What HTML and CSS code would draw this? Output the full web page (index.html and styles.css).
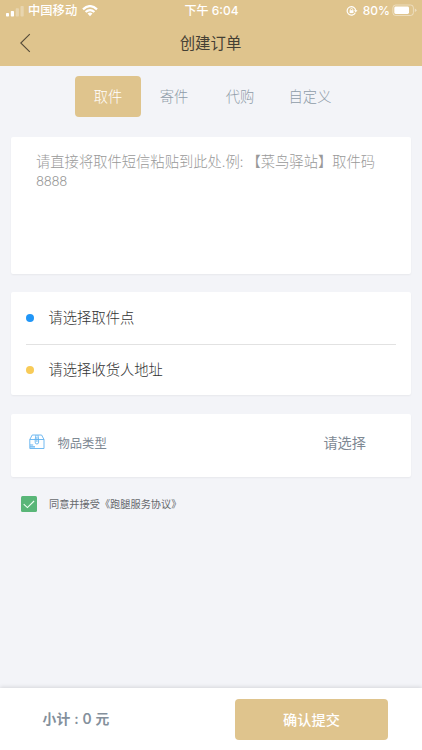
FILE: index.html
```html
<!DOCTYPE html>
<html lang="zh-CN">
<head>
<meta charset="utf-8">
<meta name="viewport" content="width=device-width">
<title>创建订单</title>
<link rel="stylesheet" href="styles.css">
</head>
<body>
<header class="header">
  <div class="status">
    <div class="carrier">
      <svg class="signal" width="18" height="12" viewBox="0 0 18 12" fill="#fff"><rect x="0" y="8" width="3" height="3.5" rx=".7"/><rect x="4.8" y="6" width="3.2" height="5.5" rx=".7"/><g opacity=".3"><rect x="9.7" y="3.3" width="3.2" height="8.2" rx=".7"/><rect x="14.5" y="1" width="3.2" height="10.5" rx=".7"/></g></svg>
      <span>中国移动</span>
      <svg class="wifi" width="16" height="12" viewBox="0 0 16 12" fill="none" stroke="#fff" stroke-width="2.3"><path d="M1 4.3Q8-2 15 4.3M3.6 7Q8 3.2 12.4 7"/><path d="M5.5 8.6Q8 6.6 10.5 8.6L8 11.2Z" fill="#fff" stroke="none"/></svg>
    </div>
    <div class="clock">下午 6:04</div>
    <div class="power">
      <svg class="lock" width="12" height="12" viewBox="0 0 12 12" fill="none" stroke="#fff"><path d="M9.3 7.7A4.3 4.3 0 1 1 9.7 5.6" stroke-width="1.2"/><path d="M8 5.2H11.5L9.7 7.5Z" fill="#fff" stroke="none"/><rect x="3.6" y="5.2" width="3.9" height="2.9" fill="#fff" stroke="none"/><path d="M4.4 5.4V4.6a1.15 1.15 0 0 1 2.3 0v.8" stroke-width=".8"/></svg>
      <span>80%</span>
      <svg width="25" height="13" viewBox="0 0 25 13"><rect x=".9" y="1" width="20.5" height="10.5" rx="2.8" fill="none" stroke="#fff" stroke-opacity=".42"/><rect x="2.3" y="2.5" width="14.7" height="7.5" rx="1.4" fill="#fff"/><path d="M22.8 4.4Q24.5 5 24.5 6.2T22.8 8Z" fill="#fff" opacity=".45"/></svg>
    </div>
  </div>
  <div class="nav">
    <svg class="back" width="12" height="20" viewBox="0 0 12 20" fill="none" stroke="#554b38" stroke-width="1.1"><path d="M9.8 1.2L.8 10L9.8 18.8"/></svg>
    <h1>创建订单</h1>
  </div>
</header>
<main>
  <nav class="tabs"><span class="tab active">取件</span><span class="tab">寄件</span><span class="tab">代购</span><span class="tab wide">自定义</span></nav>
  <section class="card message">请直接将取件短信粘贴到此处.例: 【菜鸟驿站】取件码<span class="digits">8888</span></section>
  <section class="card places">
    <div class="place"><i class="dot blue"></i><span>请选择取件点</span></div>
    <div class="place"><i class="dot yellow"></i><span>请选择收货人地址</span></div>
  </section>
  <section class="card type">
    <svg class="box" width="16" height="16" viewBox="0 0 16 16" fill="none" stroke="#62b2ef" stroke-width=".9"><path d="M.8 5.5L3.2 1H12.6L15 5.5V14.5H.8ZM.8 5.5H15M6.2 5.5L7 1M9.6 5.5L8.9 1M6.2 5.5V8.2Q6.2 10 7.9 10T9.6 8.2V5.5M7.9 3V8"/><path d="M1 11H4.2M1 12.8H6" stroke-width="1.2"/></svg>
    <span class="label">物品类型</span>
    <span class="choose">请选择</span>
  </section>
  <div class="agree">
    <svg width="16" height="16" viewBox="0 0 16 16"><rect width="16" height="16" rx="1.5" fill="#59b678"/><path d="M2.7 8.1L6.4 11.6L13.1 5" fill="none" stroke="#effff3" stroke-width="1.1"/></svg>
    <span>同意并接受《跑腿服务协议》</span>
  </div>
</main>
<footer class="footer"><span class="total">小计 : 0 元</span><button class="submit">确认提交</button></footer>
</body>
</html>
```
FILE: styles.css
```css
* { box-sizing: border-box; }
body {
  margin: 0;
  width: 422px;
  height: 750px;
  display: flex;
  flex-direction: column;
  overflow: hidden;
  background: #f3f4f8;
  font-family: "Noto Sans CJK SC", sans-serif;
  font-weight: 300;
}
svg { display: block; flex: none; }
.header { height: 65.5px; background: #dfc48d; flex: none; }
.status {
  height: 21px;
  display: grid;
  grid-template-columns: 1fr auto 1fr;
  padding: 0 5px 0 6px;
  color: #fff;
  font: 500 12.3px/21px Inter, "Noto Sans CJK SC", sans-serif;
}
.carrier, .power { display: flex; align-items: center; }
.signal { margin-right: 4px; }
.wifi { margin-left: 5px; }
.clock { letter-spacing: 0; font-size: 12px; }
.power { justify-content: flex-end; font-size: 12px; }
.lock { margin-right: 5px; }
.power span { margin-right: 2px; }
.nav { display: flex; align-items: center; height: 44px; padding-left: 20px; }
.nav h1 {
  flex: 1;
  margin: 0 33px 2px 0;
  text-align: center;
  font-size: 15.4px;
  line-height: 42px;
  font-weight: 400;
  color: #454034;
}
main { flex: 1; padding: 10.5px 11px 0 10.5px; }
.tabs { display: flex; margin: 0 0 20px 64.5px; height: 40.5px; }
.tab {
  width: 66px;
  text-align: center;
  font-size: 14.3px;
  line-height: 40px;
  color: #8f9ca8;
}
.tab.wide { width: 74px; }
.active { background: #dfc48d; color: #fff; border-radius: 4px; }
.card {
  background: #fff;
  border-radius: 2px;
  box-shadow: 0 1px 2px rgba(0, 0, 0, .05);
}
.message {
  height: 137px;
  padding: 15.5px 25px 0 25.5px;
  font-size: 14.3px;
  line-height: 18.5px;
  color: #999;
}
.digits { font-family: Inter, sans-serif; font-size: 13.2px; letter-spacing: -.3px; }
.places { height: 102.5px; margin-top: 18.5px; padding: 0 15px; }
.place {
  height: 51.5px;
  display: flex;
  align-items: center;
  font-size: 14.3px;
  color: #333;
}
.place span { padding-bottom: 2px; }
.place + .place { border-top: 1px solid #e2e2e2; }
.dot { width: 8px; height: 8px; border-radius: 50%; margin: 1px 15px 0 0; }
.blue { background: #2196f7; }
.yellow { background: #f8cb58; }
.type {
  height: 63.5px;
  margin-top: 19px;
  padding: 0 45px 5px 18px;
  display: flex;
  align-items: center;
  color: #7e8994;
}
.box { margin-bottom: 2px; }
.label { margin-left: 13px; font-size: 12.3px; font-weight: 400; }
.choose { margin-left: auto; padding-bottom: 1px; font-size: 14.2px; font-weight: 400; }
.agree {
  display: flex;
  align-items: center;
  height: 16px;
  margin: 18.5px 0 0 10.5px;
  font-size: 10.2px;
  font-weight: 400;
  color: #66696d;
}
.agree span { margin-left: 12px; padding-bottom: 1px; }
.footer {
  height: 62px;
  flex: none;
  display: flex;
  align-items: center;
  justify-content: space-between;
  padding: 0 34px 0 42.5px;
  background: #fff;
  box-shadow: 0 -1px 4px rgba(0, 0, 0, .12);
}
.total {
  font: 500 13.8px/20px Inter, "Noto Sans CJK SC", sans-serif;
  font-weight: 600;
  letter-spacing: .2px;
  color: #84909c;
}
.submit {
  width: 153px;
  height: 41px;
  padding: 0;
  border: 0;
  border-radius: 4px;
  background: #dfc48d;
  color: #fff;
  font: 500 14.2px/40px "Noto Sans CJK SC", sans-serif;
}
```
